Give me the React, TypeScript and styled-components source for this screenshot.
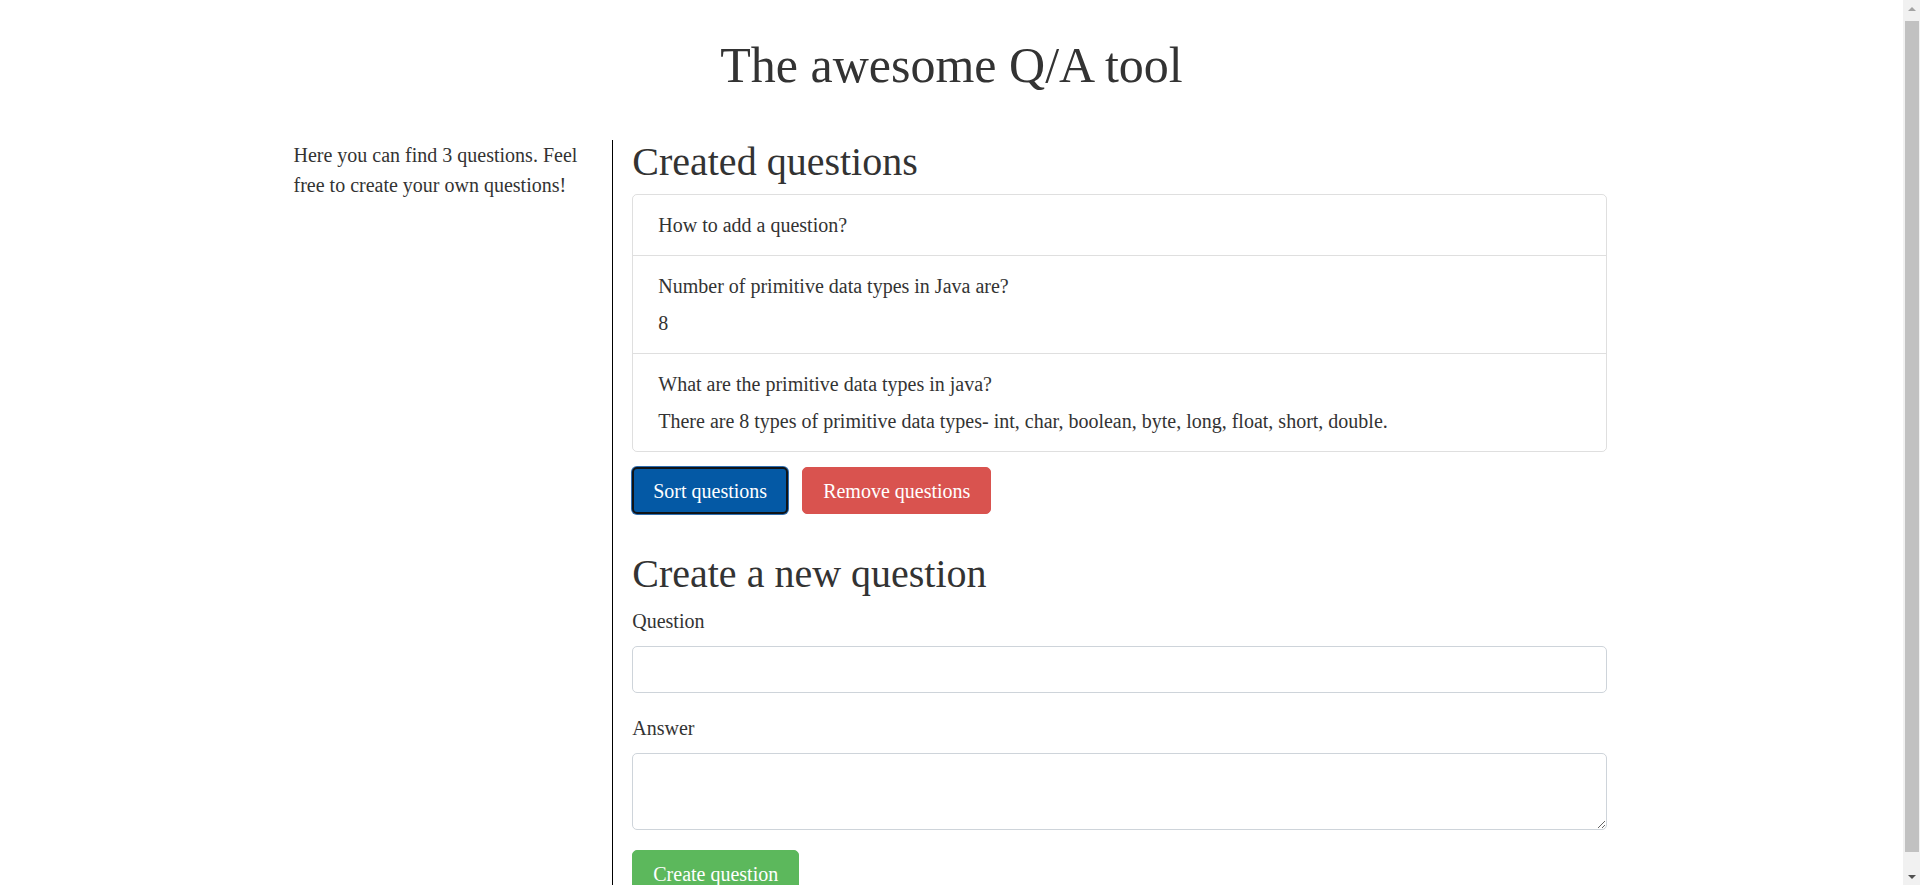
import styled, { createGlobalStyle } from "styled-components";

const GlobalStyle = createGlobalStyle`
  html, body {
    margin: 0;
    padding: 0;
    background: #fff;
  }
  body {
    font-family: "Liberation Serif", "Times New Roman", serif;
    font-size: 20px;
    line-height: 1.5;
    color: #333;
    padding-right: 17px;
  }
  *, *::before, *::after {
    box-sizing: border-box;
  }
`;

interface Question {
  question: string;
  answer?: string;
}

const questions: Question[] = [
  { question: "How to add a question?" },
  { question: "Number of primitive data types in Java are?", answer: "8" },
  {
    question: "What are the primitive data types in java?",
    answer:
      "There are 8 types of primitive data types- int, char, boolean, byte, long, float, short, double.",
  },
];

export default function App() {
  return (
    <>
      <GlobalStyle />
      <Title>The awesome Q/A tool</Title>
      <Main>
        <Sidebar>
          {`Here you can find ${questions.length} questions. Feel free to create your own questions!`}
        </Sidebar>
        <Content>
          <Heading>Created questions</Heading>
          <List>
            {questions.map((q) => (
              <Item key={q.question}>
                <div>{q.question}</div>
                {q.answer && <Answer>{q.answer}</Answer>}
              </Item>
            ))}
          </List>
          <Actions>
            <Button $color="#0459a5" $focused>
              Sort questions
            </Button>
            <Button $color="#d9534f">Remove questions</Button>
          </Actions>

          <Heading $top={38}>Create a new question</Heading>
          <FormGroup>
            <Label htmlFor="question">Question</Label>
            <Input id="question" type="text" />
          </FormGroup>
          <FormGroup>
            <Label htmlFor="answer">Answer</Label>
            <TextArea id="answer" rows={2} />
          </FormGroup>
          <Button $color="#5cb85c">Create question</Button>
        </Content>
      </Main>
      <Scrollbar>
        <Arrow $up />
        <Thumb />
        <Arrow />
      </Scrollbar>
    </>
  );
}

const Title = styled.h1`
  margin: 35px 0 45px;
  font-size: 50px;
  font-weight: 400;
  line-height: 1.2;
  text-align: center;
`;

const Main = styled.main`
  display: grid;
  grid-template-columns: 25% 75%;
  width: 1351px;
  margin-left: max(0px, calc(50% - 677px));
  padding-bottom: 8px;
`;

const Sidebar = styled.aside`
  padding: 0 19px;
`;

const Content = styled.section`
  border-left: 1px solid #000;
  padding: 0 19px;
`;

const Heading = styled.h2<{ $top?: number }>`
  margin: ${(p) => p.$top ?? 0}px 0 10px;
  font-size: 40px;
  font-weight: 400;
  line-height: 1.1;
`;

const List = styled.ul`
  list-style: none;
  margin: 0;
  padding: 0;
  border: 1px solid rgba(0, 0, 0, 0.125);
  border-radius: 5px;
`;

const Item = styled.li`
  padding: 15px 25px;
  & + & {
    border-top: 1px solid rgba(0, 0, 0, 0.125);
  }
`;

const Answer = styled.div`
  margin-top: 7px;
`;

const Actions = styled.div`
  display: flex;
  gap: 14px;
  margin-top: 15px;
`;

const Button = styled.button<{ $color: string; $focused?: boolean }>`
  display: inline-block;
  padding: 7.5px 20px;
  font-family: inherit;
  font-size: 20px;
  line-height: 30px;
  color: #fff;
  background: ${(p) => p.$color};
  border: 1px solid ${(p) => p.$color};
  border-radius: 5px;
  cursor: pointer;
  ${(p) =>
    p.$focused &&
    `
    border: 2px solid #101418;
    padding: 6.5px 19px;
    box-shadow: 0 0 0 1px #2e6db0;
  `}
`;

const FormGroup = styled.div`
  margin-bottom: 20px;
`;

const Label = styled.label`
  display: inline-block;
  margin-bottom: 10px;
`;

const fieldStyles = `
  display: block;
  width: 100%;
  padding: 7px 15px;
  font-family: inherit;
  font-size: 20px;
  line-height: 30px;
  color: #495057;
  background: #fff;
  border: 1px solid #ced4da;
  border-radius: 5px;
`;

const Input = styled.input`
  ${fieldStyles}
  height: 47px;
`;

const TextArea = styled.textarea`
  ${fieldStyles}
  height: 77px;
`;

const Scrollbar = styled.div`
  position: fixed;
  top: 0;
  right: 0;
  width: 17px;
  height: 100vh;
  display: flex;
  flex-direction: column;
  background: #f1f1f1;
`;

const Arrow = styled.div<{ $up?: boolean }>`
  flex: 0 0 17px;
  display: flex;
  align-items: center;
  justify-content: center;
  &::after {
    content: "";
    border-left: 4px solid transparent;
    border-right: 4px solid transparent;
    ${(p) =>
      p.$up
        ? "border-bottom: 4px solid #a3a3a3;"
        : "border-top: 4px solid #505050;"}
  }
`;

const Thumb = styled.div`
  flex: 1;
  margin: 4px 1px 16px 2px;
  background: #c1c1c1;
`;
